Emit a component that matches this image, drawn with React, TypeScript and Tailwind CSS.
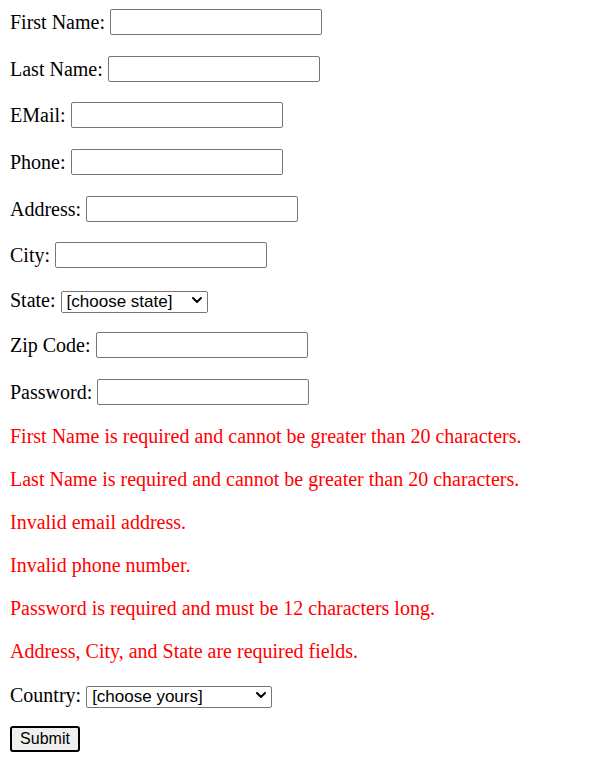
import React from "react";

const fields = [
  { label: "First Name:", type: "text" },
  { label: "Last Name:", type: "text" },
  { label: "EMail:", type: "email" },
  { label: "Phone:", type: "text" },
  { label: "Address:", type: "text" },
  { label: "City:", type: "text" },
];

const errors = [
  "First Name is required and cannot be greater than 20 characters.",
  "Last Name is required and cannot be greater than 20 characters.",
  "Invalid email address.",
  "Invalid phone number.",
  "Password is required and must be 12 characters long.",
  "Address, City, and State are required fields.",
];

const sans = { fontFamily: '"Liberation Sans", Arial, sans-serif' };

const inputCls =
  "w-[212px] h-[26px] border border-[#767676] rounded-[2px] bg-white px-1 text-[16px]";

const Row: React.FC<{ label: string; children: React.ReactNode }> = ({
  label,
  children,
}) => (
  <div className="flex items-center gap-[5px] h-[26px]">
    <label>{label}</label>
    {children}
  </div>
);

const Select: React.FC<{ text: string; width: string }> = ({ text, width }) => (
  <div className={`relative h-[22px] ${width}`}>
    <select
      className="appearance-none w-full h-full border border-[#767676] rounded-[2px] bg-white text-[17px] leading-[20px] pl-[5px] pr-[20px] text-black"
      style={sans}
    >
      <option>{text}</option>
    </select>
    <svg
      className="absolute right-[6px] top-[8px] pointer-events-none"
      width="10"
      height="6"
      viewBox="0 0 10 6"
      fill="none"
    >
      <path d="M1 1l4 4 4-4" stroke="#000" strokeWidth="2" strokeLinecap="round" strokeLinejoin="round" />
    </svg>
  </div>
);

export default function App() {
  return (
    <div
      className="min-h-[780px] bg-white text-black pl-[10px] pt-[9px] text-[20px] leading-[22px]"
      style={{ fontFamily: '"Liberation Serif", "Times New Roman", serif' }}
    >
      <form className="flex flex-col gap-[20.7px]" onSubmit={(e) => e.preventDefault()}>
        {fields.map((f) => (
          <Row key={f.label} label={f.label}>
            <input type={f.type} className={inputCls} />
          </Row>
        ))}

        <div className="flex items-center gap-[5px] h-[22px]">
          <label>State:</label>
          <Select text="[choose state]" width="w-[147px]" />
        </div>

        <Row label="Zip Code:">
          <input type="text" className={inputCls} />
        </Row>

        <Row label="Password:">
          <input type="password" className={inputCls} />
        </Row>

        <div className="flex flex-col gap-[21px] text-[#ff0000]">
          {errors.map((e) => (
            <div key={e} className="h-[22px]">
              {e}
            </div>
          ))}
        </div>

        <div className="flex items-center gap-[5px] h-[22px] mt-[1px]">
          <label>Country:</label>
          <Select text="[choose yours]" width="w-[186px]" />
        </div>

        <div className="-mt-[1px]">
          <button
            type="submit"
            className="w-[70px] h-[26px] border-2 border-black rounded-[3px] bg-[#efefef] text-[16px] leading-[20px]"
            style={sans}
          >
            Submit
          </button>
        </div>
      </form>
    </div>
  );
}
